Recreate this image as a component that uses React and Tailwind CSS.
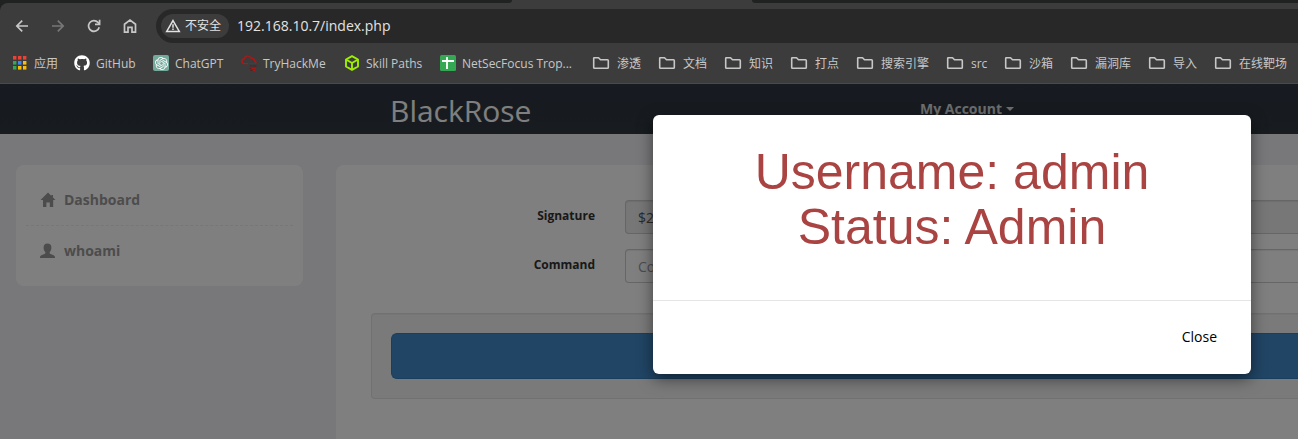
import React from "react";
import { FaGithub } from "react-icons/fa";
import { SiOpenai } from "react-icons/si";

function BackIcon() {
  return (
    <svg width="16" height="16" viewBox="0 0 16 16" fill="none" stroke="currentColor" strokeWidth="1.7">
      <path d="M14 8H3M8.2 2.6 2.8 8l5.4 5.4" />
    </svg>
  );
}

function ForwardIcon() {
  return (
    <svg width="16" height="16" viewBox="0 0 16 16" fill="none" stroke="currentColor" strokeWidth="1.7">
      <path d="M2 8h11M7.8 2.6 13.2 8l-5.4 5.4" />
    </svg>
  );
}

function ReloadIcon() {
  return (
    <svg width="16" height="16" viewBox="0 0 16 16" fill="none" stroke="currentColor" strokeWidth="1.7">
      <path d="M13.2 9.2A5.4 5.4 0 1 1 12 4.4l1.4 1.6" />
      <path d="M13.6 1.8v4.6H9" />
    </svg>
  );
}

function ChromeHomeIcon() {
  return (
    <svg width="16" height="16" viewBox="0 0 16 16" fill="none" stroke="currentColor" strokeWidth="1.7">
      <path d="M2.5 6.2 8 2l5.5 4.2v8H10V9.400H6v4.800H2.500z" />
    </svg>
  );
}

function WarningIcon() {
  return (
    <svg width="16" height="16" viewBox="0 0 16 16" fill="none" stroke="currentColor" strokeWidth="1.5">
      <path d="M8 2.6 14.3 13.4H1.7z" />
      <path d="M8 6.3v3.4M8 10.6v1.4" />
    </svg>
  );
}

function AppsIcon() {
  const colors = [
    "#ea4335", "#ea4335", "#ea4335",
    "#34a853", "#4285f4", "#fbbc04",
    "#34a853", "#fbbc04", "#fbbc04",
  ];
  return (
    <svg width="16" height="16" viewBox="0 0 16 16">
      {colors.map((c, i) => (
        <rect key={i} x={1 + (i % 3) * 5} y={1 + Math.floor(i / 3) * 5} width="3.4" height="3.6" fill={c} />
      ))}
    </svg>
  );
}

function ChatIcon() {
  return (
    <span className="flex size-4 items-center justify-center rounded-xs bg-[#74aa9c] text-white">
      <SiOpenai size={13} />
    </span>
  );
}

function CloudIcon() {
  return (
    <svg width="16" height="16" viewBox="0 0 16 16" fill="none">
      <path
        d="M7 8.600H3.400C1.800 8.600.800 7.500.800 6.200S1.800 3.900 3.100 3.800C3.600 2 5 1 6.700 1s3 .9 3.500 2.200c1.900-.2 3.300.9 3.400 2.500.9.400 1.400 1.200 1.400 2.300"
        stroke="#c11111"
        strokeWidth="1.2"
      />
      <path d="M8.5 8.500h3M12.500 8.500H15M10.500 13.500h4.500M12 15.400h2.500" stroke="#a51616" strokeWidth="1.1" />
      <path d="M9 10.900h2M11.800 10.900h3.700M8.500 13.500H10M9.500 15.400h2" stroke="#5c1f1f" strokeWidth="1.2" />
    </svg>
  );
}

function CubeIcon() {
  return (
    <svg width="16" height="16" viewBox="0 0 16 16" fill="none" stroke="#9fef00" strokeWidth="1.9" strokeLinejoin="round">
      <path d="M8 1.2 14 4.5v7L8 14.8l-6-3.3v-7z" />
      <path d="M2 4.5 8 8l6-3.5M8 8v6.8" />
    </svg>
  );
}

function SheetIcon() {
  return (
    <svg width="16" height="16" viewBox="0 0 16 16">
      <rect width="16" height="16" rx="1.5" fill="#34a853" />
      <path d="M2 6h12M7 2v12" stroke="#fff" strokeWidth="1.8" />
    </svg>
  );
}

function FolderIcon() {
  return (
    <svg width="18" height="16" viewBox="0 0 18 16" fill="none" stroke="#c7c7c7" strokeWidth="1.6" strokeLinejoin="round">
      <path d="M2.200 2.700h4.300l2 2h7q.8 0 .8.800v7q0 .8-.8.800H2.500q-.8 0-.8-.8V3.200q0-.5.5-.5z" />
    </svg>
  );
}

const bookmarks = [
  { label: "应用", icon: <AppsIcon />, width: "w-[62px]" },
  { label: "GitHub", icon: <FaGithub size={16} color="#fff" />, width: "w-[79px]" },
  { label: "ChatGPT", icon: <ChatIcon />, width: "w-[88px]" },
  { label: "TryHackMe", icon: <CloudIcon />, width: "w-[103px]" },
  { label: "Skill Paths", icon: <CubeIcon />, width: "w-[96px]" },
  { label: "NetSecFocus Trop...", icon: <SheetIcon />, width: "w-[152px]" },
];

const folders = [
  { label: "渗透", width: "w-[66px]" },
  { label: "文档", width: "w-[66px]" },
  { label: "知识", width: "w-[66px]" },
  { label: "打点", width: "w-[66px]" },
  { label: "搜索引擎", width: "w-[90px]" },
  { label: "src", width: "w-[58px]" },
  { label: "沙箱", width: "w-[66px]" },
  { label: "漏洞库", width: "w-[78px]" },
  { label: "导入", width: "w-[66px]" },
  { label: "在线靶场", width: "w-[80px]" },
];

function BrowserChrome() {
  return (
    <header className="bg-[#202222] text-[#c7c7c7]">
      <div className="flex h-[3px] bg-[#3c3c3c]">
        <div className="w-[512px] rounded-br-full bg-[#202222]" />
        <div className="w-60" />
        <div className="flex-1 rounded-bl-full bg-[#202222]" />
      </div>
      <div className="rounded-tl-lg bg-[#3c3c3c]">
        <div className="flex items-center pt-1.5 pl-3.5">
          <div className="flex w-[142px] gap-5">
            <button aria-label="Back"><BackIcon /></button>
            <button aria-label="Forward" className="text-[#777]"><ForwardIcon /></button>
            <button aria-label="Reload"><ReloadIcon /></button>
            <button aria-label="Home"><ChromeHomeIcon /></button>
          </div>
          <div className="flex h-[34px] flex-1 items-center gap-2 rounded-l-full bg-[#282828] pl-[5px]">
            <button className="flex h-6 items-center gap-1 rounded-full bg-[#3c3c3c] pr-2 pl-1 text-xs whitespace-nowrap text-[#e3e3e3]">
              <WarningIcon />
              不安全
            </button>
            <input
              aria-label="Address"
              className="min-w-0 flex-1 bg-transparent text-sm text-[#e3e3e3] outline-none"
              defaultValue="192.168.10.7/index.php"
            />
          </div>
        </div>
        <nav aria-label="Bookmarks" className="flex h-[41px] items-center overflow-hidden border-b border-[#4a4a4a] pl-3 text-xs whitespace-nowrap">
          {bookmarks.map((b) => (
            <a key={b.label} href="#" className={`flex shrink-0 items-center gap-1.5 ${b.width}`}>
              {b.icon}
              <span className="pt-px">{b.label}</span>
            </a>
          ))}
          {folders.map((f) => (
            <a key={f.label} href="#" className={`flex shrink-0 items-center gap-[7px] ${f.width}`}>
              <FolderIcon />
              <span className="pt-px">{f.label}</span>
            </a>
          ))}
        </nav>
      </div>
    </header>
  );
}

function Sidebar() {
  return (
    <nav className="w-[287px] shrink-0 self-start rounded-lg bg-white p-2.5 text-sm font-bold text-[#999]">
      <a href="#" className="flex h-[51px] items-center gap-2 border-b border-dashed border-[#eee] px-3.5">
        <svg width="16" height="16" viewBox="0 0 16 16" fill="currentColor">
          <path d="M8 .5 15.5 8H13.200v7H9.800v-4.500H6.400V15H3V8H.5z" />
          <path d="M11.3 3h1.700v3h-1.700z" />
        </svg>
        Dashboard
      </a>
      <a href="#" className="flex h-[50px] items-center gap-2 px-3.5">
        <svg width="16" height="16" viewBox="0 0 16 16" fill="currentColor">
          <path d="M7.500.5c2.500 0 3.900 1.500 3.900 4 0 2-.7 3.600-1.700 4.600v1.300c.8.800 5.300 1.500 5.300 3.600v1H0v-1c0-2.100 4.500-2.800 5.300-3.600V9.100c-1-1-1.700-2.600-1.700-4.600 0-2.500 1.400-4 3.900-4z" />
        </svg>
        whoami
      </a>
    </nav>
  );
}

function CommandForm() {
  return (
    <form className="min-w-0 flex-1 rounded-tl-lg bg-white pt-[35px] pl-[35px]" onSubmit={(e) => e.preventDefault()}>
      <div className="grid grid-cols-[224px_1fr] gap-x-[30px] gap-y-[15px]">
        <label htmlFor="signature" className="pt-1.5 text-right text-xs leading-5 font-bold text-[#333]">
          Signature
        </label>
        <input
          id="signature"
          readOnly
          defaultValue="$2y$10$"
          className="h-[34px] w-full min-w-0 rounded-l border border-r-0 border-[#ccc] bg-[#eee] px-3 text-sm text-[#555] shadow-[inset_0_1px_1px_rgba(0,0,0,0.075)]"
        />
        <label htmlFor="command" className="pt-1.5 text-right text-xs leading-5 font-bold text-[#333]">
          Command
        </label>
        <input
          id="command"
          placeholder="Command"
          className="h-[34px] w-full min-w-0 rounded-l border border-r-0 border-[#ccc] bg-white px-3 text-sm shadow-[inset_0_1px_1px_rgba(0,0,0,0.075)] placeholder:text-[#999]"
        />
      </div>
      <div className="mt-[30px] rounded-l border border-r-0 border-[#e3e3e3] bg-[#f5f5f5] py-[19px] pl-[19px] shadow-[inset_0_1px_1px_rgba(0,0,0,0.05)]">
        <button aria-label="Submit" className="block h-[46px] w-full rounded-l-md border border-r-0 border-[#357ebd] bg-[#428bca]" />
      </div>
    </form>
  );
}

function Modal() {
  return (
    <div className="absolute inset-0 flex items-start justify-end bg-black/50 pt-[31px] pr-[47px]">
      <div
        role="dialog"
        aria-modal="true"
        aria-labelledby="modal-title"
        className="w-[598px] rounded-md bg-white shadow-[0_5px_15px_rgba(0,0,0,0.5)]"
      >
        <div className="px-5 pt-[30px] pb-[45px]">
          <h1 id="modal-title" className="text-center font-['Liberation_Sans',Arial,sans-serif] text-[50px] leading-[55px] text-[#a94442]">
            Username: admin
            <br />
            Status: Admin
          </h1>
        </div>
        <div className="flex justify-end border-t border-[#e5e5e5] px-5 pt-[19px] pb-5">
          <button className="h-[34px] rounded px-3.5 text-sm text-black">Close</button>
        </div>
      </div>
    </div>
  );
}

export default function App() {
  return (
    <div className="flex min-h-screen flex-col overflow-hidden font-['Open_Sans','Noto_Sans_CJK_SC',sans-serif]">
      <BrowserChrome />
      <div className="relative flex flex-1 flex-col bg-[#f0f1f4]">
        <div className="flex h-[50px] items-center bg-linear-to-b from-[#2e3644] to-[#2e383e] pl-[390px]">
          <a href="#" className="w-[530px] pt-1 text-[30px] leading-10 text-white">BlackRose</a>
          <button className="flex items-center gap-1 text-sm font-bold whitespace-nowrap text-[#ddd]">
            My Account
            <svg width="8" height="4" viewBox="0 0 8 4" fill="currentColor">
              <path d="M0 0h8L4 4z" />
            </svg>
          </button>
        </div>
        <main className="flex flex-1 gap-[33px] pt-[31px] pl-4">
          <Sidebar />
          <CommandForm />
        </main>
        <Modal />
      </div>
    </div>
  );
}
